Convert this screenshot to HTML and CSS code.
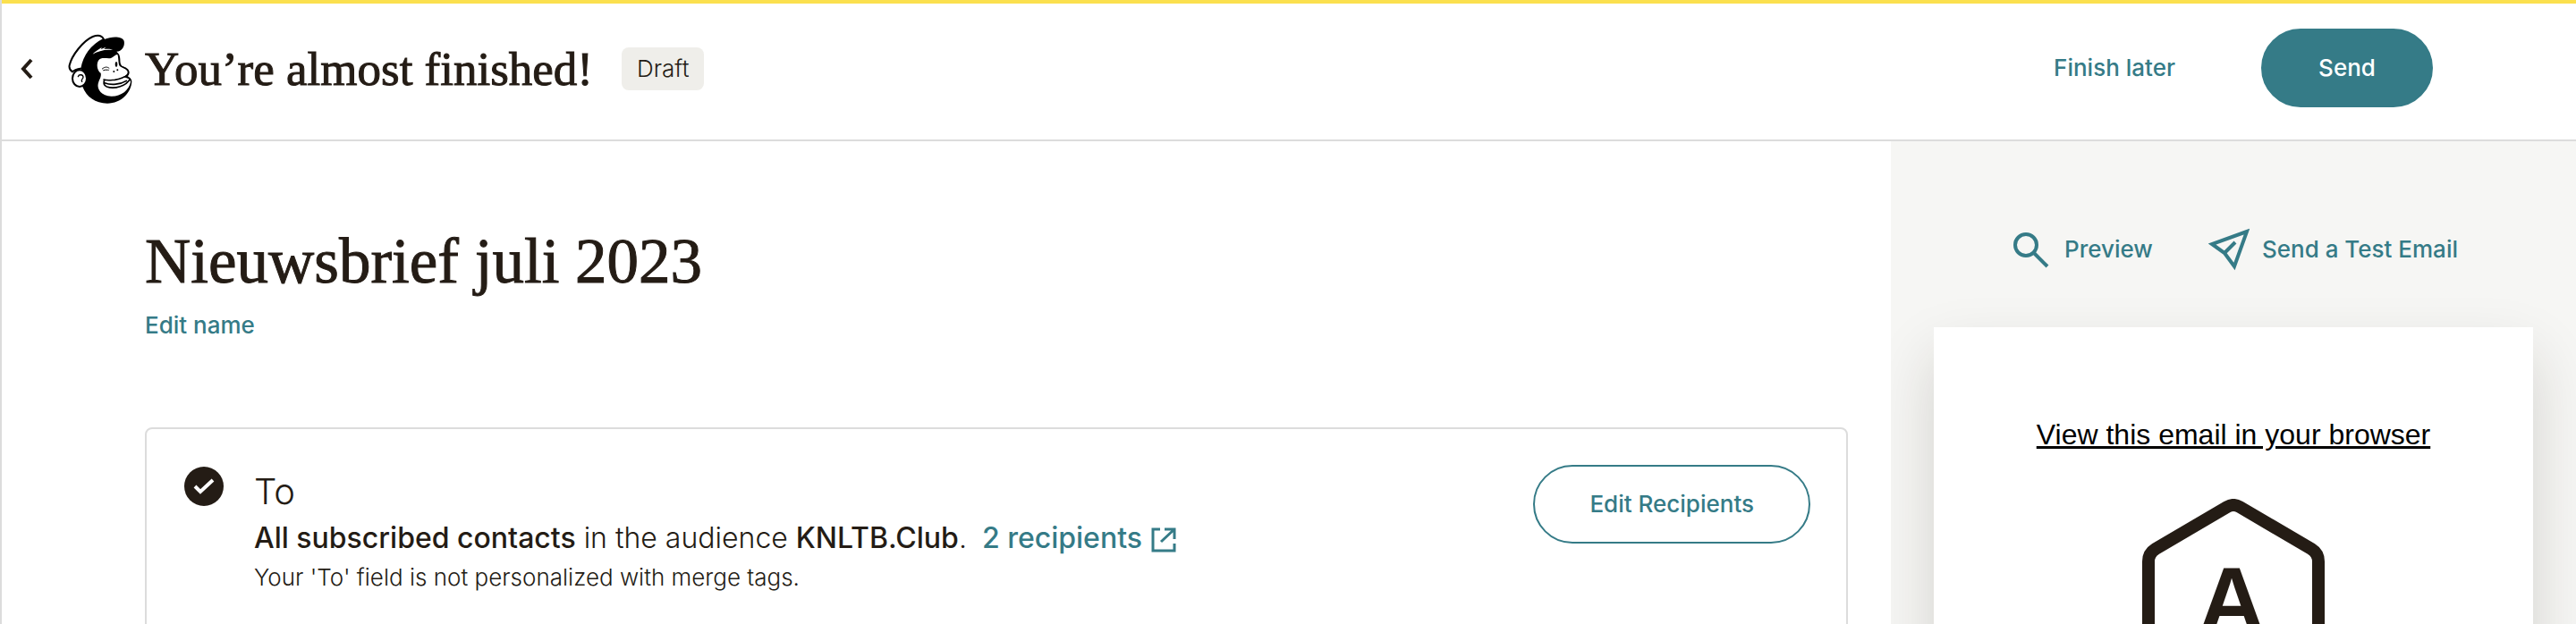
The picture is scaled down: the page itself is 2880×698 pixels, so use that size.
FILE: index.html
```html
<!DOCTYPE html>
<html lang="en">
  <head>
    <meta charset="UTF-8" />
    <meta name="viewport" content="width=device-width, initial-scale=1.0" />
    <title>Nieuwsbrief juli 2023</title>
    <link rel="stylesheet" href="styles.css">
  </head>
  <body>
    <div class="app">
      <header class="header">
        <div class="header-left">
          <button class="back" type="button" aria-label="Back">
            <svg width="16" height="24" viewBox="0 0 16 24"><path d="M13 2 L4 12 L13 22" fill="none" stroke="currentColor" stroke-width="4" /></svg>
          </button>
          <svg class="logo" viewBox="30 24 222 240" role="img" aria-label="Logo">
            <!-- head and cap brim -->
            <path d="M78 150 C80 108 112 62 155 45 C180 34 214 34 221 50 C225 68 213 86 196 86 C204 92 208 100 208 112 C208 122 209 130 214 134 C226 138 239 144 239 156 C239 162 236 166 233 168 C240 174 247 177 247 187 C245 224 212 260 165 260 C125 260 95 238 82 204 Z" />
            <!-- cap -->
            <path d="M48 154 C39 148 36 142 38 132 C46 98 84 50 116 36 C132 30 146 30 153 45 C116 64 88 98 79 142 C68 144 55 146 48 154 Z" fill="#fff" stroke="#000" stroke-width="6" stroke-linejoin="round" />
            <!-- ear -->
            <ellipse cx="72" cy="176" rx="24" ry="28" fill="#fff" stroke="#000" stroke-width="6" />
            <path d="M67 170 C70 161 84 163 84 172 C84 179 75 179 80 187" fill="none" stroke="#000" stroke-width="4" stroke-linecap="round" />
            <!-- face -->
            <path d="M135 116 C143 105 158 109 170 109 C184 109 190 95 199 96 C203 104 201 126 206 134 C212 141 233 144 233 155 C233 164 222 170 212 173 C226 172 241 176 243 188 C238 216 210 237 178 236 C146 235 130 212 134 194 C137 181 146 170 143 158 C132 151 127 130 135 116 Z" fill="#fff" />
            <path d="M114 96 C126 84 138 78 146 72 L144 78 L160 71 L154 78 C166 76 178 77 183 81 C158 78 134 84 114 96 Z" fill="#fff" />
            <!-- mouth -->
            <path d="M153 180 C165 184 176 182 190 181 C210 178 224 171 234 164 M156 181 C150 190 153 200 163 204 C190 214 230 200 241 178 M156 191 C178 200 210 196 229 184" fill="none" stroke="#000" stroke-width="5" stroke-linecap="round" />
            <!-- eyes and nose -->
            <path d="M148 144 C156 137 165 136 171 142 M152 149 C160 146 165 148 169 148" fill="none" stroke="#000" stroke-width="3" stroke-linecap="round" />
            <ellipse cx="195" cy="129" rx="4" ry="9" />
            <circle cx="187" cy="153" r="3" />
            <circle cx="199" cy="148" r="3" />
          </svg>
          <h1 class="header-title">You’re almost finished!</h1>
          <span class="badge">Draft</span>
        </div>
        <div class="header-actions">
          <a class="link" href="#">Finish later</a>
          <button class="btn btn-primary" type="button">Send</button>
        </div>
      </header>

      <div class="content">
        <main class="main">
          <h2 class="campaign-name">Nieuwsbrief juli 2023</h2>
          <a class="link" href="#">Edit name</a>

          <section class="card">
            <svg class="check" viewBox="0 0 44 44"><circle cx="22" cy="22" r="22" fill="#241c15" /><path d="M12 22 L18 28 L32 15" fill="none" stroke="#fff" stroke-width="4" /></svg>
            <div class="card-body">
              <h3 class="card-title">To</h3>
              <p class="audience">
                <b>All subscribed contacts</b> in the audience <b>KNLTB.Club</b>.
                <a class="recipients" href="#">2 recipients<svg class="external" viewBox="0 0 28 28"><path d="M10 2 H2 V26 H26 V18 M15 2 H26 V13 M26 2 L11 16" fill="none" stroke="currentColor" stroke-width="3" /></svg></a>
              </p>
              <p class="note">Your 'To' field is not personalized with merge tags.</p>
            </div>
            <button class="btn btn-outline" type="button">Edit Recipients</button>
          </section>
        </main>

        <aside class="aside">
          <nav class="aside-actions">
            <a class="link" href="#">
              <svg class="icon" viewBox="0 0 48 48"><circle cx="19" cy="19" r="12" fill="none" stroke="currentColor" stroke-width="4" /><path d="M28 28 L43 43" stroke="currentColor" stroke-width="4" /></svg>
              Preview
            </a>
            <a class="link" href="#">
              <svg class="icon" viewBox="0 0 48 48"><path d="M45 4 L6 18 L20 28 L31 43 Z" fill="none" stroke="currentColor" stroke-width="4" /><path d="M20 28 L32 16" stroke="currentColor" stroke-width="4" /></svg>
              Send a Test Email
            </a>
          </nav>
          <div class="email">
            <a class="email-link" href="#">View this email in your browser</a>
            <svg class="email-logo" viewBox="0 0 204 232">
              <path d="M95 9 Q102 5 109 9 L189 56 Q197 61 197 70 V162 Q197 171 189 176 L109 223 Q102 227 95 223 L15 176 Q7 171 7 162 V70 Q7 61 15 56 Z" fill="none" stroke="#241c15" stroke-width="14" />
              <text x="100" y="149" text-anchor="middle">A</text>
            </svg>
          </div>
        </aside>
      </div>
    </div>
  </body>
</html>
```

FILE: styles.css
```css
* {
  margin: 0;
  padding: 0;
  box-sizing: border-box;
}
body {
  font-family: Inter, "Liberation Sans", sans-serif;
  font-size: 26px;
  line-height: 36px;
  color: #241c15;
  background-color: #fff;
}
button {
  font: inherit;
  cursor: pointer;
}
svg {
  flex-shrink: 0;
}
.app {
  height: 100vh;
  display: flex;
  flex-direction: column;
  border-left: 2px solid #dcdcdc;
}
.header {
  display: flex;
  align-items: center;
  justify-content: space-between;
  padding: 28px 160px 36px 20px;
  border-top: 4px solid #fbe04e;
  border-bottom: 2px solid #dcdcdc;
}
.header-left {
  display: flex;
  align-items: center;
  padding-top: 2px;
}
.back {
  display: flex;
  border: none;
  background: none;
  color: #241c15;
}
.logo {
  width: 74px;
  height: 80px;
  margin-left: 37px;
}
.header-title {
  margin-left: 13px;
  font-family: "Liberation Serif", serif;
  font-size: 53px;
  font-weight: 400;
  line-height: 64px;
  -webkit-text-stroke: 1px #241c15;
}
.badge {
  margin-left: 32px;
  padding: 6px 17px;
  border-radius: 8px;
  background-color: #efeeea;
  font-weight: 300;
}
.header-actions {
  display: flex;
  align-items: center;
  gap: 96px;
}
.link {
  display: inline-flex;
  align-items: center;
  gap: 14px;
  color: #357b87;
  font-weight: 500;
  text-decoration: none;
}
.btn {
  min-width: 192px;
  height: 88px;
  padding: 0 61px;
  border: 2px solid #357b87;
  border-radius: 44px;
  font-weight: 500;
}
.btn-primary {
  background-color: #357b87;
  color: #fff;
}
.btn-outline {
  background-color: #fff;
  color: #357b87;
}
.content {
  flex: 1;
  min-height: 0;
  display: flex;
}
.main {
  flex: 1;
  padding: 94px 48px 0 160px;
  overflow: hidden;
}
.campaign-name {
  margin-bottom: 14px;
  font-family: "Liberation Serif", serif;
  font-size: 71px;
  font-weight: 400;
  line-height: 80px;
  -webkit-text-stroke: 1px #241c15;
}
.card {
  display: flex;
  align-items: flex-start;
  min-height: 320px;
  margin-top: 96px;
  padding: 40px;
  border: 2px solid #dcdcdc;
  border-radius: 8px;
}
.check {
  width: 44px;
  height: 44px;
  margin: 2px 34px 0 2px;
}
.card-body {
  flex: 1;
}
.card-title {
  margin-top: 4px;
  font-size: 40px;
  font-weight: 300;
  line-height: 52px;
}
.audience {
  font-size: 32px;
  font-weight: 300;
  line-height: 52px;
}
.audience b {
  font-weight: 500;
}
.recipients {
  margin-left: 8px;
  color: #357b87;
  font-weight: 500;
  text-decoration: none;
}
.external {
  width: 28px;
  height: 28px;
  margin-left: 10px;
  vertical-align: -5px;
}
.note {
  font-weight: 300;
}
.aside {
  width: 766px;
  padding: 97px 48px 0;
  background-color: #f6f6f4;
  overflow: hidden;
}
.aside-actions {
  display: flex;
  justify-content: center;
  gap: 60px;
}
.icon {
  width: 48px;
  height: 48px;
}
.email {
  display: flex;
  flex-direction: column;
  align-items: center;
  margin-top: 63px;
  padding: 98px 0;
  background-color: #fff;
  box-shadow: 0 32px 64px rgba(36, 28, 21, 0.16);
}
.email-link {
  font-family: "Liberation Sans", sans-serif;
  font-size: 32px;
  line-height: 44px;
  color: #000;
}
.email-logo {
  width: 204px;
  height: 232px;
  margin-top: 50px;
}
.email-logo text {
  font-family: "Liberation Sans", sans-serif;
  font-size: 104px;
  font-weight: 700;
  fill: #241c15;
}
```
